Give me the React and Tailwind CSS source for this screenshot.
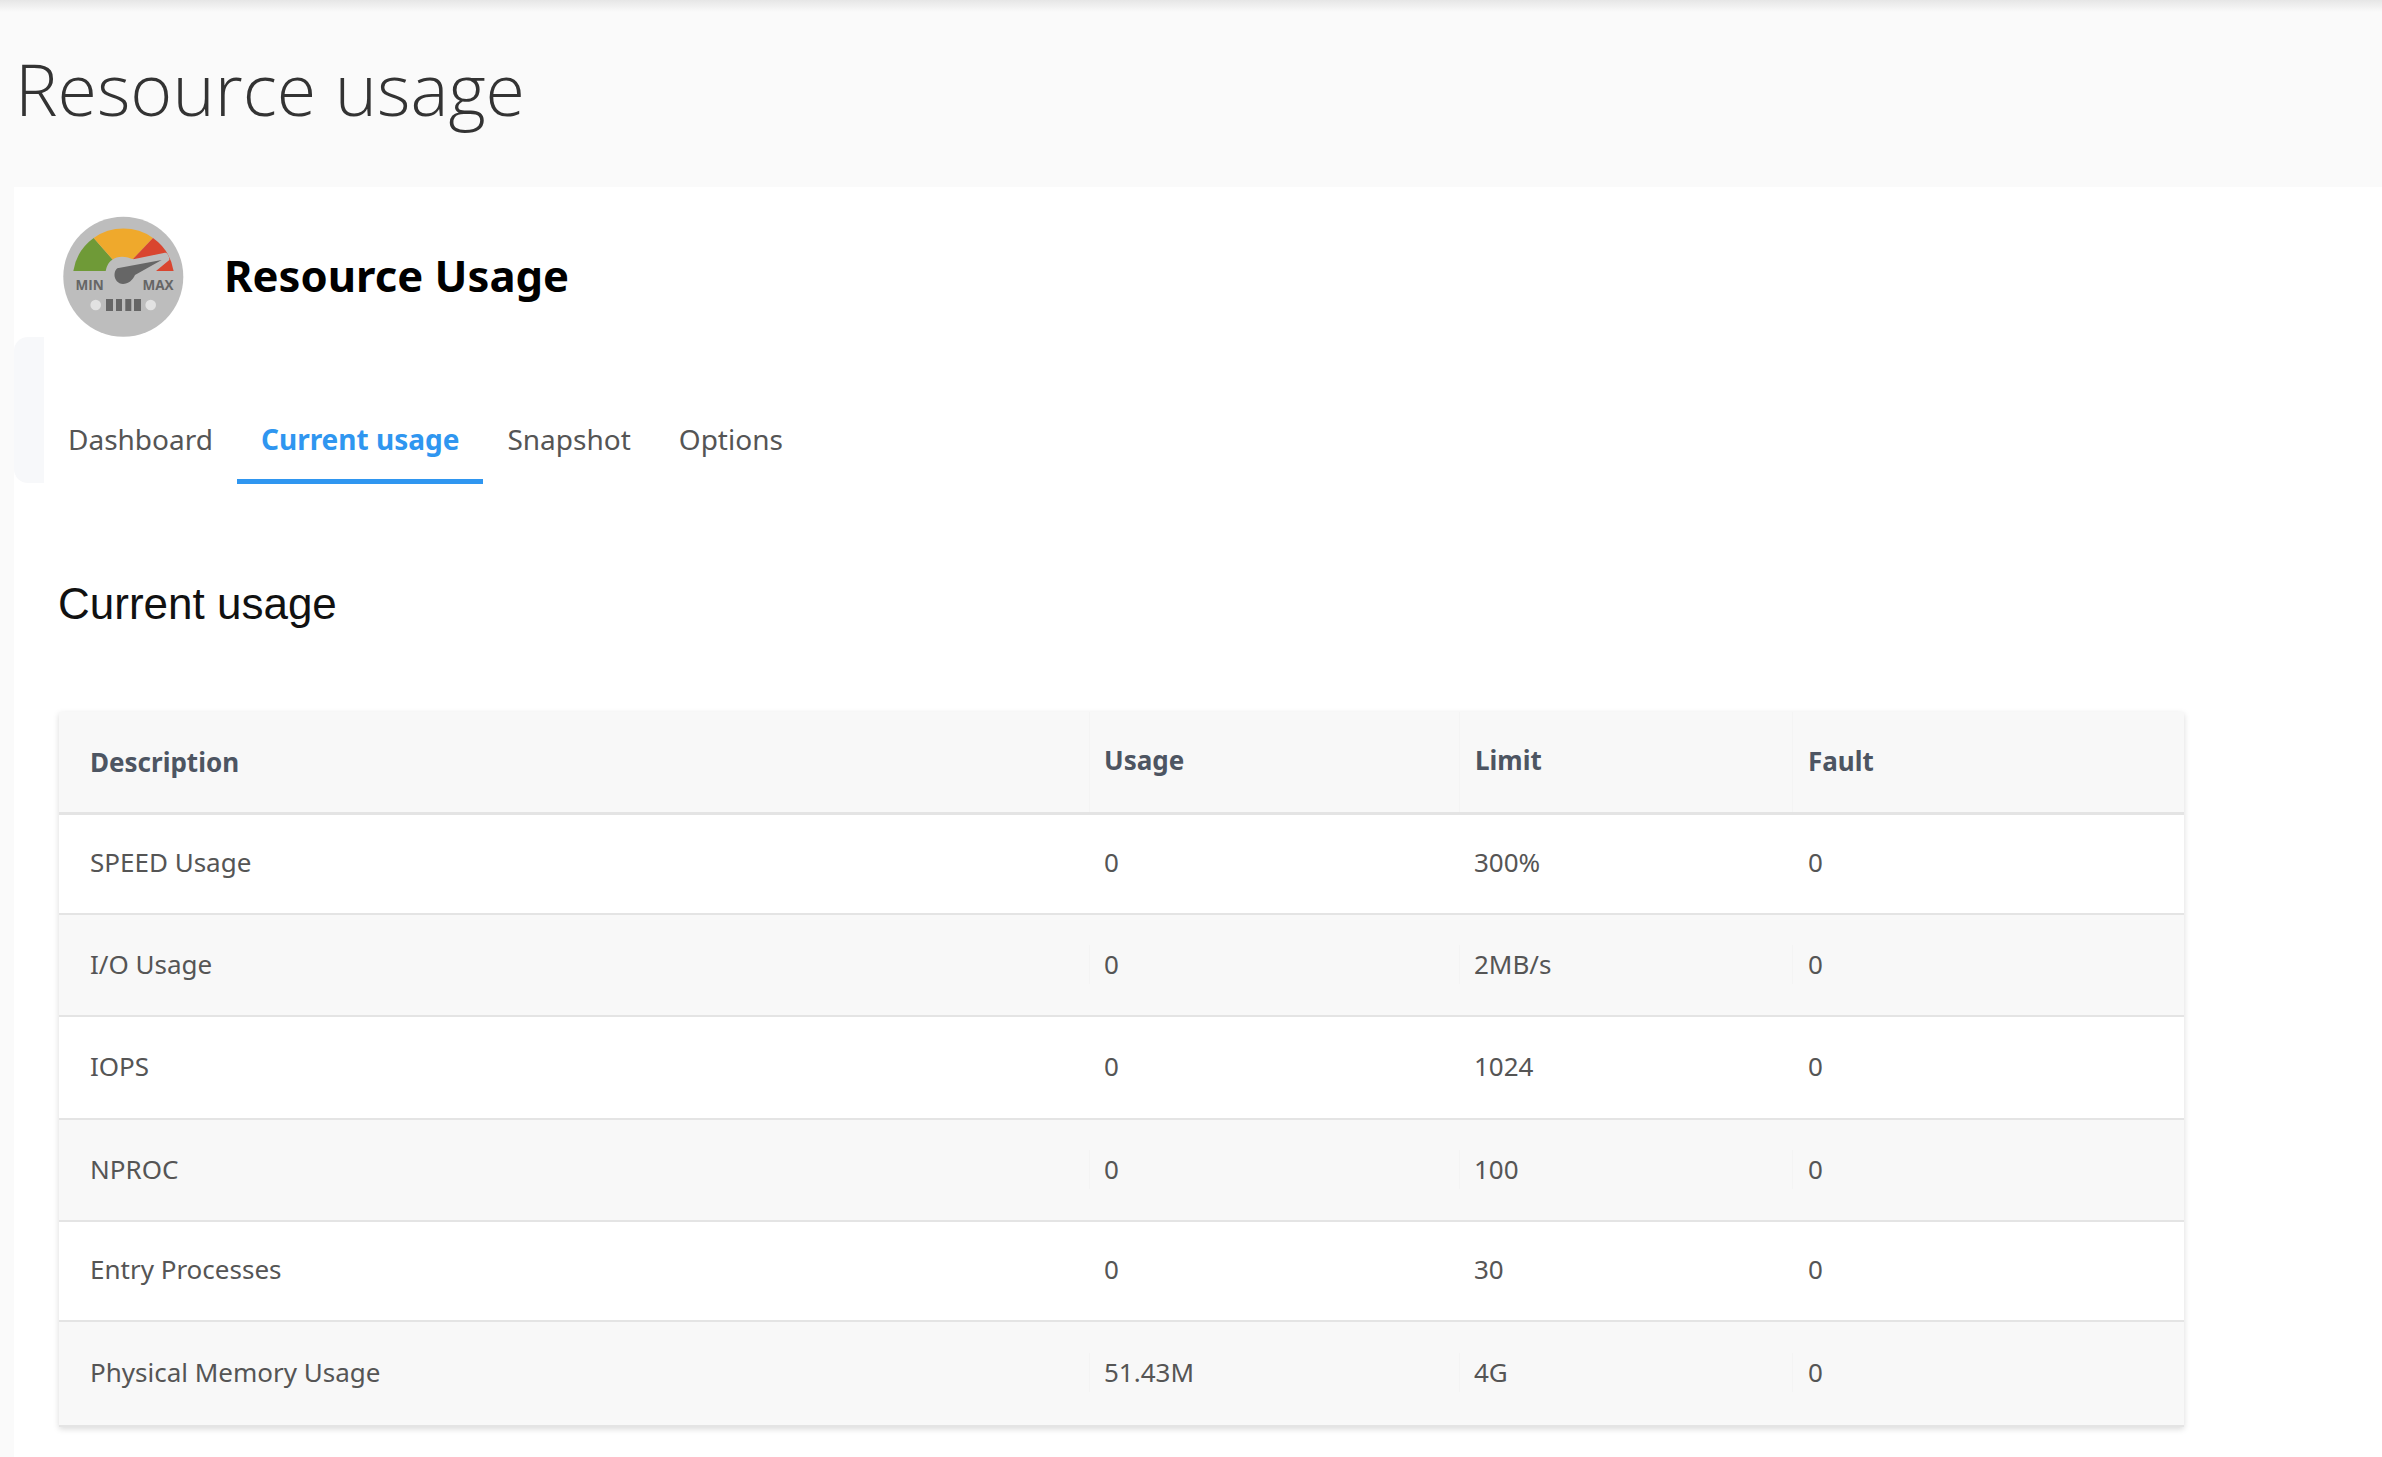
import React from 'react'

const rows = [
  ['SPEED Usage', '0', '300%', '0'],
  ['I/O Usage', '0', '2MB/s', '0'],
  ['IOPS', '0', '1024', '0'],
  ['NPROC', '0', '100', '0'],
  ['Entry Processes', '0', '30', '0'],
  ['Physical Memory Usage', '51.43M', '4G', '0'],
]

const rowStyles = ['h-[100px] pb-[4px]', 'h-[102px] pb-[2px]', 'h-[103px] pb-[2px]', 'h-[102px] pb-[2px]', 'h-[100px] pb-[3px]', 'h-[105px] pb-[2px]']

function Gauge() {
  return (
    <svg viewBox="22 15 122 124" className="w-[122px] h-[124px] shrink-0">
      <circle cx="83.3" cy="76.7" r="60" fill="#bdbdbd" />
      <path d="M33.3 71A50.5 50.5 0 0 1 53.7 38L73 60 67 71Z" fill="#6f9a37" />
      <path d="M53.7 38A50.5 50.5 0 0 1 113 38L93 59 73 60Z" fill="#efa92c" />
      <path d="M113 38A50.5 50.5 0 0 1 133.6 71H105L93 59Z" fill="#d9452f" />
      <path d="M65.7 71C67 65 69 62 72 60 75 57.5 78 56.7 82 56.7 86 56.7 90 58 93.3 59.3L125 52.7C127.5 52 129.5 57 129.3 60L116 71H65.7Z" fill="#bdbdbd" />
      <path d="M121.7 60L95 75C93 80 88 84 83 84 78 84 74.5 79.5 74.5 75 74.5 72 75.5 70 77.3 68.3Z" fill="#666" />
      <text x="35.5" y="89.5" fontSize="13.5" fontWeight="700" fill="#666" fontFamily="'Open Sans', sans-serif">MIN</text>
      <text x="102.5" y="89.5" fontSize="13.5" fontWeight="700" fill="#666" fontFamily="'Open Sans', sans-serif">MAX</text>
      <circle cx="55.7" cy="105" r="5.3" fill="#e2e2e2" />
      <circle cx="110.7" cy="105" r="5.3" fill="#e2e2e2" />
      <rect x="66" y="99" width="7" height="12" fill="#666" />
      <rect x="76" y="99" width="6" height="12" fill="#666" />
      <rect x="85.3" y="99" width="6" height="12" fill="#666" />
      <rect x="94" y="99" width="7" height="12" fill="#666" />
    </svg>
  )
}

function Tab({ label, active }) {
  return (
    <div
      className={`px-6 h-[147px] flex items-end pb-[19px] border-b-[5px] ${
        active ? 'border-[#2f96f0] text-[#2f96f0] font-bold' : 'border-transparent text-[#555]'
      }`}
    >
      {label}
    </div>
  )
}

export default function App() {
  return (
    <div className="min-h-[1457px] bg-[#fafafa] font-['Noto_Sans',sans-serif] overflow-hidden">
      <div className="h-[187px] pl-[15px] pt-[45px] bg-[linear-gradient(#e6e6e6,#fafafa_12px)]">
        <h1 className="font-['Open_Sans',sans-serif] font-light text-[71.7px] leading-[86px] text-[#333]">Resource usage</h1>
      </div>

      <div className="ml-[14px] bg-white h-[1270px] relative">
        <div className="absolute left-0 top-[150px] w-[30px] h-[146px] bg-[#f7f8fa] rounded-l-[14px]" />

        <div className="h-[150px] pl-[48px] pt-[28px]">
          <div className="flex items-center h-[124px]">
            <Gauge />
            <h2 className="ml-[40px] text-[43.6px] font-bold text-black leading-none -mt-[3px]">Resource Usage</h2>
          </div>
        </div>

        <div className="relative flex pl-[30px] text-[28px]">
          <Tab label="Dashboard" />
          <Tab label="Current usage" active />
          <Tab label="Snapshot" />
          <Tab label="Options" />
        </div>

        <h3 className="ml-[44px] mt-[95px] font-['Liberation_Sans',sans-serif] text-[44px] leading-[50px] text-[#111]">Current usage</h3>

        <div className="ml-[45px] mt-[83px] w-[2125px] shadow-[0_2px_6px_rgba(0,0,0,0.15)] text-[26px] text-[#555]">
          <div className="flex items-center h-[103px] bg-[#f8f8f8] border-b-[3px] border-[#e4e4e4] font-bold text-[#4d5562]">
            <div className="w-[1030px] pl-[31px]">Description</div>
            <div className="w-[370px] pl-[14px] h-full flex items-center pb-[4px] border-l border-[#f4f4f4]">Usage</div>
            <div className="w-[333px] pl-[15px] h-full flex items-center pb-[4px] border-l border-[#f4f4f4]">Limit</div>
            <div className="flex-1 pl-[15px] h-full flex items-center pb-[1px] border-l border-[#f4f4f4]">Fault</div>
          </div>
          {rows.map((row, i) => {
            const divider = i % 2 ? 'border-[#f4f4f4]' : 'border-transparent'
            return (
              <div
                key={row[0]}
                className={`flex items-center border-b-2 border-[#e4e4e4] ${rowStyles[i]} ${i % 2 ? 'bg-[#f8f8f8]' : 'bg-white'}`}
              >
                <div className="w-[1030px] pl-[31px]">{row[0]}</div>
                <div className={`w-[370px] pl-[14px] border-l ${divider}`}>{row[1]}</div>
                <div className={`w-[333px] pl-[14px] border-l ${divider}`}>{row[2]}</div>
                <div className={`flex-1 pl-[15px] border-l ${divider}`}>{row[3]}</div>
              </div>
            )
          })}
        </div>
      </div>
    </div>
  )
}
